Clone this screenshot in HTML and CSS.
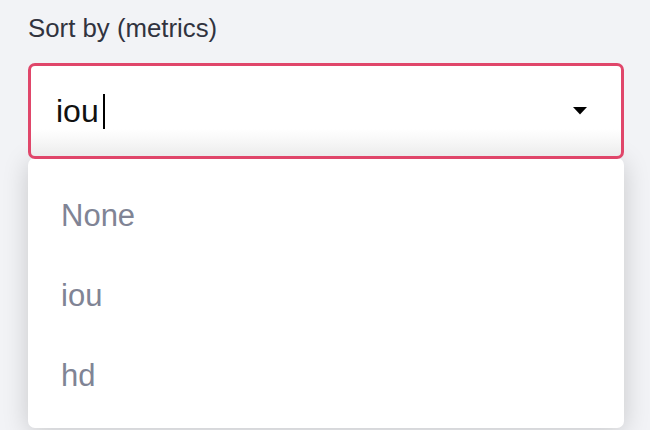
FILE: index.html
```html
<!DOCTYPE html>
<html>
<head>
<meta charset="utf-8">
<link rel="stylesheet" href="styles.css">
</head>
<body>
<div class="field">
  <label class="label">Sort by (metrics)</label>
  <div class="combo">
    <div class="select">
      <div class="value">iou<span class="caret"></span></div>
      <svg class="arrow" width="14" height="8" viewBox="0 0 14 8"><path d="M0 0 H14 L7 7.5 Z" fill="#000"/></svg>
    </div>
    <ul class="menu">
      <li class="option">None</li>
      <li class="option">iou</li>
      <li class="option">hd</li>
    </ul>
  </div>
</div>
</body>
</html>
```
FILE: styles.css
```css
* { box-sizing: border-box; }
html, body { margin: 0; padding: 0; }
body {
  background: #f2f3f6;
  font-family: "Liberation Sans", Arial, sans-serif;
  width: 650px;
  height: 430px;
  overflow: hidden;
}
.field {
  padding: 13px 26px 0 28px;
}
.label {
  display: block;
  font-size: 25.8px;
  line-height: 30px;
  color: #31333f;
}
.combo {
  position: relative;
  margin-top: 20px;
}
.select {
  position: relative;
  z-index: 2;
  height: 96px;
  border: 3px solid #e0466a;
  border-radius: 7px;
  background: linear-gradient(to bottom, #fff 0, #fff 70%, #f7f7f7 84%, #ececec 100%);
  display: flex;
  align-items: center;
  padding: 0 34px 0 25px;
}
.value {
  flex: 1;
  font-size: 32px;
  color: #111;
  display: flex;
  align-items: center;
}
.caret {
  display: inline-block;
  width: 2px;
  height: 35px;
  background: #000;
  margin-left: 4px;
}
.arrow { display: block; }
.menu {
  position: absolute;
  z-index: 1;
  top: 95px;
  left: 0;
  right: 0;
  height: 270px;
  margin: 0;
  padding: 18px 0 0 0;
  list-style: none;
  background: #fff;
  border-radius: 7px;
  box-shadow: 0 4px 26px rgba(0, 0, 0, 0.18);
}
.option {
  height: 80px;
  display: flex;
  align-items: center;
  padding-left: 33px;
  font-size: 31px;
  color: #808495;
}
```
